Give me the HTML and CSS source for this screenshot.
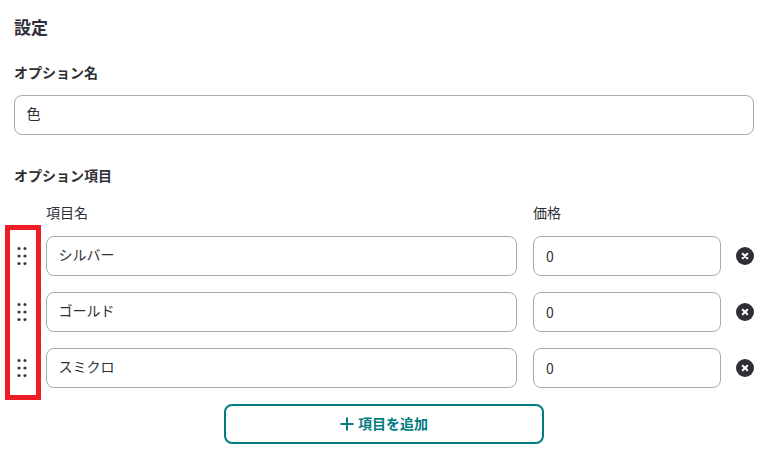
FILE: index.html
```html
<!DOCTYPE html>
<html lang="ja">
<head>
    <meta charset="UTF-8">
    <title>設定</title>
    <link rel="stylesheet" href="styles.css">
</head>
<body>
    <main class="settings">
        <h2 class="title">設定</h2>

        <label class="label name-label">オプション名</label>
        <div class="input text-input">色</div>

        <h3 class="label items-label">オプション項目</h3>
        <div class="item-head">
            <span class="col-name">項目名</span>
            <span class="col-price">価格</span>
        </div>

        <ul class="items">
            <li class="item">
                <svg class="handle" viewBox="0 0 10 20"><circle cx="2" cy="2.500" r="1.600"/><circle cx="8" cy="2.500" r="1.600"/><circle cx="2" cy="10" r="1.600"/><circle cx="8" cy="10" r="1.600"/><circle cx="2" cy="17.500" r="1.600"/><circle cx="8" cy="17.500" r="1.600"/></svg>
                <div class="input text-input item-name">シルバー</div>
                <div class="input item-price">0</div>
                <svg class="remove" viewBox="0 0 18 18"><circle cx="9" cy="9" r="9"/><path d="M6.700 6.700l4.600 4.600M11.300 6.700l-4.600 4.600"/></svg>
            </li>
            <li class="item">
                <svg class="handle" viewBox="0 0 10 20"><circle cx="2" cy="2.500" r="1.600"/><circle cx="8" cy="2.500" r="1.600"/><circle cx="2" cy="10" r="1.600"/><circle cx="8" cy="10" r="1.600"/><circle cx="2" cy="17.500" r="1.600"/><circle cx="8" cy="17.500" r="1.600"/></svg>
                <div class="input text-input item-name">ゴールド</div>
                <div class="input item-price">0</div>
                <svg class="remove" viewBox="0 0 18 18"><circle cx="9" cy="9" r="9"/><path d="M6.700 6.700l4.600 4.600M11.300 6.700l-4.600 4.600"/></svg>
            </li>
            <li class="item">
                <svg class="handle" viewBox="0 0 10 20"><circle cx="2" cy="2.500" r="1.600"/><circle cx="8" cy="2.500" r="1.600"/><circle cx="2" cy="10" r="1.600"/><circle cx="8" cy="10" r="1.600"/><circle cx="2" cy="17.500" r="1.600"/><circle cx="8" cy="17.500" r="1.600"/></svg>
                <div class="input text-input item-name">スミクロ</div>
                <div class="input item-price">0</div>
                <svg class="remove" viewBox="0 0 18 18"><circle cx="9" cy="9" r="9"/><path d="M6.700 6.700l4.600 4.600M11.300 6.700l-4.600 4.600"/></svg>
            </li>
        </ul>

        <button class="add-btn">
            <svg class="plus" viewBox="0 0 14 14"><path d="M0.500 7h13M7 0.500v13"/></svg>
            <span class="add-text">項目を追加</span>
        </button>

        <!-- red annotation around the drag handles -->
        <div class="highlight"></div>
    </main>
</body>
</html>
```

FILE: styles.css
```css
body {
    margin: 0;
    background: #fff;
    color: #2f2f37;
    font-family: "Noto Sans CJK JP", "Noto Sans", sans-serif;
}

.settings {
    position: relative;
    width: 740px;
    height: 463px;
    padding-left: 14px;
    overflow: hidden;
}

.title {
    margin: 0;
    padding-top: 17px;
    font-size: 17px;
    font-weight: 700;
    line-height: 20px;
}

.label {
    display: block;
    margin: 0;
    font-size: 14px;
    font-weight: 700;
    line-height: 20px;
}

.name-label {
    margin-top: 25px;
    margin-bottom: 13px;
}

.items-label {
    margin-top: 30px;
}

.input {
    display: flex;
    align-items: center;
    box-sizing: border-box;
    height: 40px;
    padding: 0 12px;
    border: 1px solid #a9a9b0;
    border-radius: 8px;
    font-size: 14px;
    background: #fff;
}

/* text sits a bit higher than the number in the price box */
.text-input {
    padding-bottom: 4px;
    padding-left: 11.500px;
}

.item-head {
    display: flex;
    margin-top: 17px;
    font-size: 14px;
    line-height: 20px;
}

.col-name {
    width: 487px;
    margin-left: 32px;
}

.items {
    list-style: none;
    margin: 14px 0 0;
    padding: 0;
}

.item {
    display: flex;
    align-items: center;
    margin-bottom: 16px;
}

.handle {
    width: 10px;
    height: 20px;
    margin-left: 3px;
    margin-right: 19px;
    fill: #3c3c44;
}

.item-name {
    width: 471px;
}

.item-price {
    width: 188px;
    margin-left: 16px;
}

.remove {
    width: 18px;
    height: 18px;
    margin-left: 15px;
    fill: #2f2f37;
}

.remove path {
    fill: none;
    stroke: #fff;
    stroke-width: 2;
    stroke-linecap: round;
}

.add-btn {
    display: flex;
    align-items: center;
    justify-content: center;
    gap: 4px;
    box-sizing: border-box;
    width: 320px;
    height: 40px;
    margin: 0 0 0 210px;
    border: 2px solid #007c80;
    border-radius: 8px;
    background: #fff;
    color: #007c80;
    font-family: inherit;
    font-size: 14px;
    font-weight: 700;
}

.add-text {
    position: relative;
    top: -1px;
}

.plus {
    width: 14px;
    height: 14px;
    fill: none;
    stroke: #007c80;
    stroke-width: 2;
}

.highlight {
    position: absolute;
    left: 5px;
    top: 225px;
    width: 26px;
    height: 165px;
    border: 5px solid #ee1c25;
}
```
